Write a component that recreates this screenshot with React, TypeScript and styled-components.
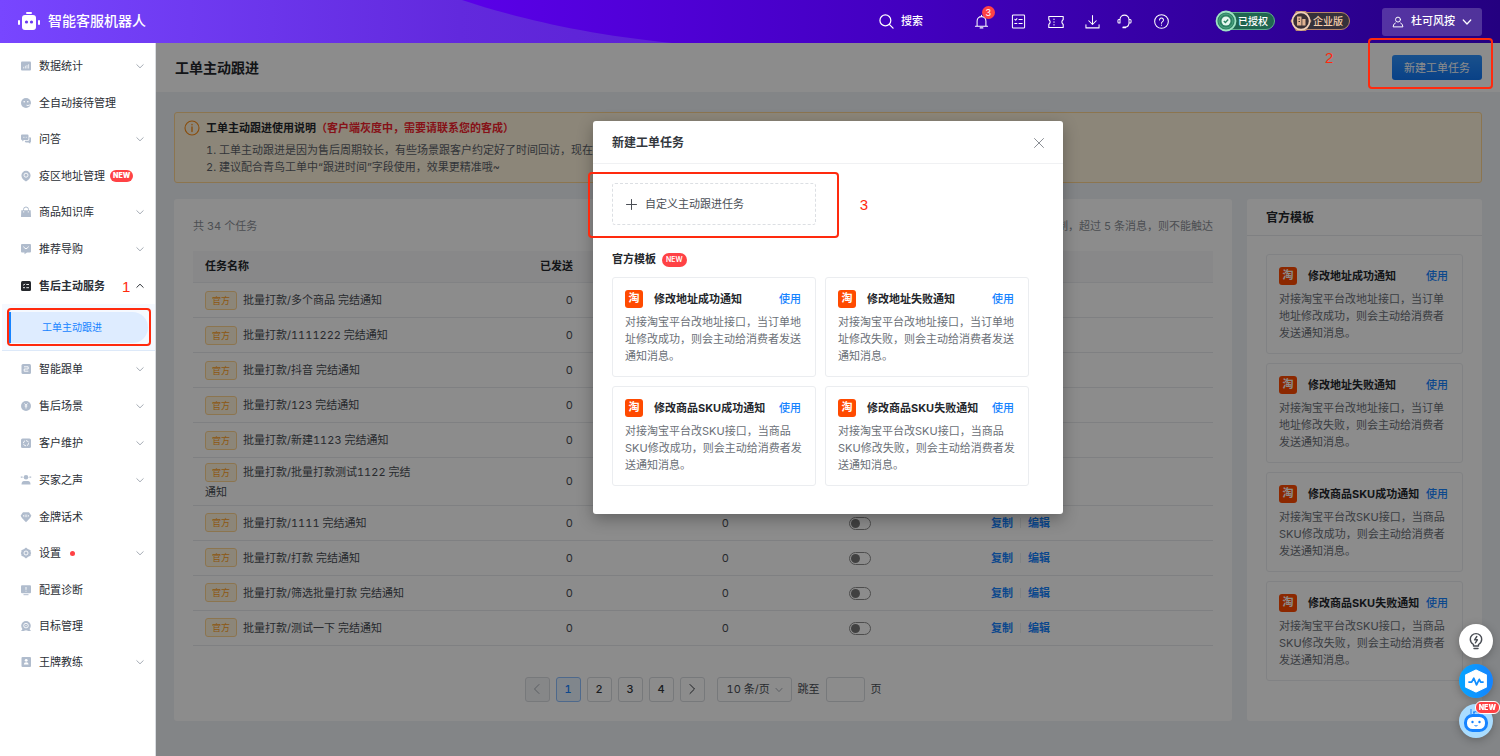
import React, { useState } from 'react';
import styled, { createGlobalStyle, css } from 'styled-components';

const GlobalStyle = createGlobalStyle`
  *, *::before, *::after { box-sizing: border-box; }
  body {
    margin: 0;
    font-family: Inter, "Noto Sans CJK SC", sans-serif;
    font-size: 11px;
    line-height: 17px;
    color: #33373d;
    font-variant-numeric: tabular-nums;
  }
  button, input, select { font: inherit; color: inherit; }
  button { padding: 0; border: 0; background: none; cursor: pointer; }
  a { color: inherit; text-decoration: none; }
  h1, h2, h3, p, ul, ol { margin: 0; padding: 0; }
  ul { list-style: none; }
  svg { display: block; flex: none; }
`;

const blue = '#1683ff';
const red = '#ff4245';
const markRed = '#ff2a0e';

/* ---------- page frame ---------- */

const Page = styled.div`
  display: flex;
  flex-direction: column;
  min-height: 100vh;
`;

const Body = styled.div`
  display: flex;
  flex: 1;
`;

/* ---------- top bar ---------- */

const TopBar = styled.header`
  position: relative;
  display: flex;
  align-items: center;
  justify-content: space-between;
  height: 43px;
  padding: 0 18px;
  overflow: hidden;
  background: linear-gradient(90deg, #7846ff 0, #6229dd 460px, #5b20d2 720px);
  color: #fff;
`;

const TopBarWave = styled.svg`
  position: absolute;
  inset: 0;
  width: 100%;
  height: 100%;
`;

const Brand = styled.a`
  position: relative;
  display: flex;
  align-items: center;
  gap: 8px;
  padding-bottom: 2px;
  font-size: 14px;
  font-weight: 500;
  line-height: 20px;
`;

const TopTools = styled.div`
  position: relative;
  display: flex;
  align-items: center;
`;

const SearchButton = styled.button`
  display: flex;
  align-items: center;
  gap: 7px;
  margin-right: 51px;
  font-weight: 500;
`;

const IconGroup = styled.div<{ $gap: number }>`
  display: flex;
  align-items: center;
  gap: ${(p) => p.$gap}px;
`;

const IconButton = styled.button`
  position: relative;
  display: grid;
  place-items: center;
  width: 15px;
  height: 20px;
`;

const Count = styled.span`
  position: absolute;
  top: -6px;
  left: 8px;
  width: 13px;
  height: 13px;
  border-radius: 7px;
  background: ${red};
  font-size: 9px;
  line-height: 13px;
  text-align: center;
`;

const Plans = styled.div`
  display: flex;
  gap: 15px;
  margin: 0 32px 0 46px;
  padding-bottom: 2px;
`;

const Plan = styled.span<{ $tone: 'green' | 'bronze' }>`
  display: flex;
  align-items: center;
  width: 60px;
  height: 22px;
  font-size: 10px;
  font-weight: 500;
  line-height: 16px;
  color: ${(p) => (p.$tone === 'green' ? '#fff' : '#f6cfae')};

  span {
    flex: 1;
    height: 18px;
    margin-left: -10px;
    padding-left: 10px;
    border: 1px solid ${(p) => (p.$tone === 'green' ? '#5fae8b' : '#b58468')};
    border-radius: 0 9px 9px 0;
    background: ${(p) => (p.$tone === 'green' ? '#1f6650' : '#35303a')};
    white-space: nowrap;
  }

  svg { position: relative; }
`;

const UserButton = styled.button`
  display: flex;
  align-items: center;
  justify-content: center;
  gap: 7px;
  width: 100px;
  height: 28px;
  border-radius: 3px;
  background: rgba(255, 255, 255, 0.2);
  font-weight: 500;
`;

/* ---------- side bar ---------- */

const SideBar = styled.nav`
  flex: none;
  width: 156px;
  padding-top: 5px;
  border-right: 1px solid #d9dce0;
  background: #fff;
`;

const NavGroup = styled.li<{ $expandable: boolean; $open?: boolean }>`
  padding-bottom: ${(p) => (p.$expandable && !p.$open ? 1 : 0)}px;
`;

const NavItem = styled.a<{ $active?: boolean }>`
  position: relative;
  display: flex;
  align-items: center;
  height: 36px;
  padding: 0 11px 0 20px;
  font-weight: ${(p) => (p.$active ? 700 : 400)};
  color: #2b2f36;

  > svg:first-child { color: ${(p) => (p.$active ? '#24272c' : '#b0bccd')}; }
`;

const NavLabel = styled.span`
  margin-left: 7px;
`;

const NavArrow = styled.svg<{ $active?: boolean }>`
  margin-left: auto;
  color: ${(p) => (p.$active ? '#33373d' : '#a6acb5')};
`;

const NavDot = styled.i`
  width: 5px;
  height: 5px;
  margin-left: 9px;
  border-radius: 50%;
  background: ${red};
`;

const NewFlag = styled.em`
  height: 12px;
  margin-left: 5px;
  padding: 0 3px;
  border-radius: 6px;
  background: ${red};
  color: #fff;
  font-size: 7px;
  font-style: normal;
  font-weight: 900;
  line-height: 12px;
`;

const SubMenu = styled.ul`
  height: 47px;
  margin-left: 2px;
  padding: 8px 7px;
  border-bottom: 1px solid #dde9f9;
  background: #f5f9ff;
`;

const SubItem = styled.a`
  position: relative;
  display: flex;
  align-items: center;
  height: 31px;
  padding-left: 31px;
  border-left: 2px solid ${blue};
  border-radius: 0 16px 16px 0;
  background: #deecff;
  color: ${blue};
  font-size: 10px;
`;

/* ---------- annotation marks laid over the page ---------- */

const markFrame = css`
  border: 2px solid ${markRed};
  border-radius: 4px;
  pointer-events: none;
`;

const markDigit = css`
  color: ${markRed};
  font-family: "Liberation Sans", sans-serif;
  font-size: 15px;
  font-weight: 400;
  line-height: 18px;
`;

const SubItemMark = styled.span`
  ${markFrame}
  position: absolute;
  inset: -4px -3px -3px -4px;
`;

const StepOne = styled.span`
  ${markDigit}
  position: absolute;
  top: 10px;
  left: 122px;
`;

const CreateMark = styled.div`
  ${markFrame}
  position: absolute;
  z-index: 3;
  top: 38px;
  right: 7px;
  width: 125px;
  height: 51px;

  span {
    ${markDigit}
    position: absolute;
    top: 9px;
    left: -45px;
  }
`;

const CustomMark = styled.span`
  ${markFrame}
  position: absolute;
  inset: -12px -24px -14px -25px;

  b {
    ${markDigit}
    position: absolute;
    top: 22px;
    right: -31px;
  }
`;

/* ---------- main area ---------- */

const Main = styled.main`
  position: relative;
  flex: 1;
  min-width: 0;
  background: #eff2f6;
`;

const PageHead = styled.div`
  display: flex;
  align-items: center;
  justify-content: space-between;
  height: 49px;
  padding: 0 18px 0 19px;
  background: #fff;

  h1 {
    font-size: 14px;
    font-weight: 700;
    line-height: 20px;
    color: #24272c;
  }
`;

const PrimaryButton = styled.button`
  height: 25px;
  padding: 1px 12px 0;
  border-radius: 3px;
  background: linear-gradient(#2f93ff, #1177f5);
  color: #fff;
`;

const Content = styled.div`
  padding: 20px 18px 36px;
`;

const Notice = styled.section`
  display: flex;
  gap: 6px;
  height: 71px;
  padding: 7px 9px;
  border: 1px solid #ffd591;
  border-radius: 3px;
  background: #fff5dd;
  color: #5d6269;

  h2 {
    font-size: 11px;
    font-weight: 700;
    line-height: 17px;
    color: #24272c;
  }
  h2 span { color: #f5222d; }
  p:first-of-type { margin-top: 5px; }
`;

const Columns = styled.div`
  display: flex;
  align-items: stretch;
  gap: 15px;
  margin-top: 16px;
`;

const Panel = styled.section`
  border-radius: 3px;
  background: #fff;
`;

const TaskPanel = styled(Panel)`
  flex: 1;
  min-width: 0;
  padding: 19px;
`;

const TaskSummary = styled.div`
  display: flex;
  justify-content: space-between;
  height: 33px;
  color: #8b9097;
`;

const TaskTable = styled.table`
  width: 100%;
  border-collapse: separate;
  border-spacing: 0;
  table-layout: fixed;

  th {
    height: 32px;
    padding: 0 12px;
    border-bottom: 1px solid #ebedf0;
    background: #f8f8f9;
    color: #24272c;
    font-weight: 700;
    text-align: left;
  }
  td {
    height: 35px;
    padding: 4px 12px;
    border-bottom: 1px solid #e8eaed;
    color: #4a4e55;
    line-height: 18px;
  }
  td.name { padding-right: 8px; }
  th.num, td.num { text-align: right; }
  td.mid { text-align: center; }
`;

const OfficialTag = styled.span`
  display: inline-block;
  height: 19px;
  margin-right: 6px;
  padding: 0 6px;
  border: 1px solid #ffd591;
  border-radius: 3px;
  background: #fff5dd;
  color: #ffa023;
  font-size: 9px;
  line-height: 17px;
  vertical-align: middle;
`;

const TaskName = styled.span`
  vertical-align: middle;
`;

const Switch = styled.input`
  appearance: none;
  display: block;
  width: 22px;
  height: 13px;
  margin: 2px auto 0;
  padding: 1px;
  border: 1px solid #8d8d8d;
  border-radius: 7px;
  cursor: pointer;

  &::before {
    content: '';
    display: block;
    width: 9px;
    height: 9px;
    border-radius: 50%;
    background: #777;
  }
  &:checked { border-color: ${blue}; }
  &:checked::before { margin-left: auto; background: ${blue}; }
`;

const RowActions = styled.div`
  display: flex;
  align-items: center;
  gap: 7px;
  color: ${blue};
  font-weight: 700;

  i {
    width: 1px;
    height: 10px;
    background: #eceef1;
  }
`;

const Pager = styled.nav`
  display: flex;
  align-items: center;
  justify-content: center;
  gap: 6px;
  margin-top: 31px;
  color: #4a4e55;

  label { display: contents; }
`;

const PageButton = styled.button<{ $current?: boolean }>`
  display: grid;
  place-items: center;
  width: 25px;
  height: 25px;
  border: 1px solid ${(p) => (p.$current ? '#8fbfff' : '#d9dce0')};
  border-radius: 3px;
  background: ${(p) => (p.$current ? '#e9f4ff' : '#fff')};
  color: ${(p) => (p.$current ? blue : '#33373d')};
  font-weight: 500;

  &:disabled {
    background: #f5f6f8;
    color: #a6acb5;
  }
`;

const SizeField = styled.div`
  position: relative;
  margin-left: 6px;

  select {
    appearance: none;
    display: block;
    width: 75px;
    height: 25px;
    padding: 0 9px;
    border: 1px solid #d9dce0;
    border-radius: 3px;
    background: #fff;
  }
  svg {
    position: absolute;
    top: 9px;
    right: 9px;
    color: #a6acb5;
    pointer-events: none;
  }
`;

const JumpInput = styled.input`
  width: 39px;
  height: 25px;
  border: 1px solid #d9dce0;
  border-radius: 3px;
  background: #fff;
`;

const TemplatePanel = styled(Panel)`
  flex: none;
  width: 235px;

  > h2 {
    height: 37px;
    padding: 0 19px;
    border-bottom: 1px solid #e8eaed;
    font-size: 12px;
    font-weight: 700;
    line-height: 38px;
    color: #24272c;
  }
  > ul {
    display: flex;
    flex-direction: column;
    gap: 9px;
    padding: 18px 19px;
  }
`;

/* ---------- template card, used in the side panel and the dialog ---------- */

const Card = styled.li`
  padding: 12px 12px 11px;
  border: 1px solid #ebedf0;
  border-radius: 3px;

  p {
    margin-top: 6px;
    color: #6b7077;
  }
`;

const CardHead = styled.div`
  display: flex;
  align-items: center;
  height: 18px;
  padding-right: 2px;

  h3 {
    flex: 1;
    margin-left: 11px;
    font-size: 11px;
    font-weight: 700;
    line-height: 17px;
    color: #24272c;
    white-space: nowrap;
  }
  button {
    color: ${blue};
    font-weight: 500;
  }
`;

const ShopMark = styled.span`
  width: 18px;
  height: 18px;
  border-radius: 3px;
  background: #ff4a00;
  color: #fff;
  font-size: 11px;
  font-weight: 700;
  line-height: 17px;
  text-align: center;
`;

/* ---------- dialog ---------- */

const Mask = styled.div`
  position: absolute;
  z-index: 1;
  inset: 0;
  display: flex;
  justify-content: center;
  align-items: flex-start;
  padding-top: 78px;
  background: rgba(0, 0, 0, 0.45);
`;

const Dialog = styled.div`
  width: 470px;
  border-radius: 3px;
  background: #fff;
  box-shadow: 0 5px 16px rgba(0, 0, 0, 0.3);
`;

const DialogHead = styled.div`
  display: flex;
  align-items: center;
  justify-content: space-between;
  height: 43px;
  padding: 2px 18px 0 19px;
  border-bottom: 1px solid #f0f1f3;

  h2 {
    font-size: 12px;
    font-weight: 700;
    line-height: 18px;
    color: #33373d;
  }
  button { color: #8b8f95; }
`;

const DialogBody = styled.div`
  padding: 19px 19px 28px;
`;

const CustomTask = styled.button`
  position: relative;
  display: flex;
  align-items: center;
  gap: 8px;
  width: 204px;
  height: 42px;
  padding: 1px 13px 0;
  border: 1px dashed #dcdfe3;
  border-radius: 3px;
  color: #4a4e55;
`;

const GroupTitle = styled.h3`
  display: flex;
  align-items: center;
  gap: 6px;
  margin-top: 26px;
  font-size: 11px;
  font-weight: 700;
  line-height: 17px;
  color: #24272c;

  em {
    height: 14px;
    padding: 0 4px;
    border-radius: 7px;
    background: ${red};
    color: #fff;
    font-size: 7px;
    font-style: normal;
    font-weight: 600;
    line-height: 14px;
  }
`;

const TemplateGrid = styled.ul`
  display: grid;
  grid-template-columns: repeat(2, 204px);
  gap: 9px;
  margin-top: 9px;
`;

/* ---------- floating helpers ---------- */

const FloatStack = styled.div`
  position: fixed;
  z-index: 3;
  right: 7px;
  bottom: 18px;
  display: flex;
  flex-direction: column;
  gap: 6px;
`;

const FloatButton = styled.button<{ $bg: string }>`
  position: relative;
  display: grid;
  place-items: center;
  width: 34px;
  height: 34px;
  border-radius: 50%;
  background: ${(p) => p.$bg};
  box-shadow: 0 2px 8px rgba(0, 0, 0, 0.25);
  color: #4a4e55;

  em {
    position: absolute;
    top: -3px;
    right: -7px;
    height: 13px;
    margin: 0;
    border: 1px solid #fff;
    line-height: 11px;
  }
`;

/* ---------- icons ---------- */

type IconProps = { children: React.ReactNode; size?: number; box?: number; stroke?: number };

const Line = ({ children, size = 16, box = 16, stroke = 1 }: IconProps) => (
  <svg width={size} height={size} viewBox={`0 0 ${box} ${box}`} fill="none" stroke="currentColor" strokeWidth={stroke} strokeLinecap="round" strokeLinejoin="round" aria-hidden="true">
    {children}
  </svg>
);

const Solid = ({ children }: { children: React.ReactNode }) => (
  <svg width="12" height="12" viewBox="0 0 12 12" fill="currentColor" aria-hidden="true">
    {children}
  </svg>
);

const Chevron = ({ up, size = 8 }: { up?: boolean; size?: number }) => (
  <Line size={size} box={8} stroke={1}>
    <path d={up ? 'M1 5.6 4 2.4 7 5.6' : 'M1 2.4 4 5.6 7 2.4'} />
  </Line>
);

const w = { stroke: '#fff', strokeWidth: 0.9, fill: 'none' } as const;

const navIcons: Record<string, React.ReactNode> = {
  stats: <Solid><rect x="1" y="1.5" width="10" height="9" rx="1" /><path d="M3.7 8.5V6.8M5.4 8.5V5.8M7 8.5V5M8.6 8.5V4.2" {...w} strokeWidth=".7" /></Solid>,
  reception: <Solid><circle cx="6" cy="6" r="5" /><circle cx="4.2" cy="4.8" r=".8" fill="#fff" /><circle cx="7.8" cy="4.8" r=".8" fill="#fff" /><path d="M6.500 8.200Q8 9 9.500 8H11" {...w} /></Solid>,
  qa: <Solid><path d="M1 2.400Q1 1.500 2 1.500H7.500Q8.500 1.500 8.500 2.500V6Q8.500 7 7.500 7H4L2.300 8.500V7H2Q1 7 1 6Z" /><path d="M9.300 4.200H10Q11 4.200 11 5.200V8.500Q11 9.400 10.200 9.400V10.800L8.500 9.400H5.800Q4.900 9.400 4.900 8.600V7.800H8Q9.300 7.800 9.300 6.500Z" /><path d="M3.200 4.300H3.800M4.600 4.300H5.200M6 4.300H6.600" {...w} /></Solid>,
  pin: <Solid><path d="M6 .8A4.600 4.600 0 0 1 10.600 5.400C10.600 8 8.500 9.800 6 11.400 3.500 9.800 1.400 8 1.400 5.400A4.600 4.600 0 0 1 6 .8Z" /><circle cx="6" cy="5.200" r="2" {...w} /></Solid>,
  bag: <Solid><path d="M1.300 4.200H10.700L11 11H1Z" /><path d="M3.500 5V3.500A2.500 2.500 0 0 1 8.500 3.500V5" fill="none" stroke="currentColor" strokeWidth="1" /><path d="M3.700 5V6.600M8.300 5V6.600" {...w} strokeWidth=".7" /></Solid>,
  guide: <Solid><path d="M2 1H10Q11 1 11 2V8.500Q11 9.500 10 9.500H7L4.500 11.200V9.500H2Q1 9.500 1 8.500V2Q1 1 2 1Z" /><path d="M3.500 3.500 5 5.500H7L8.500 3.500" {...w} /></Solid>,
  service: <Solid><rect x="1" y="1" width="10" height="10" rx="1.500" /><path d="M3 4.500 3.800 5.200 5 3.800M6.300 4.500H9M3 7.700H5M6.300 7.700H9" {...w} /></Solid>,
  follow: <Solid><rect x="1.500" y="1" width="9.500" height="10" rx="1.500" /><path d="M4 3.800H8.200V6H4.200V8.200H8.400" {...w} /></Solid>,
  yen: <Solid><circle cx="6" cy="6" r="5" /><path d="M4.500 3.500 6 5.200 7.500 3.500M6 5.200V8.500M4.700 6H7.300" {...w} /></Solid>,
  care: <Solid><rect x="1" y="1.500" width="10" height="9.500" rx="1.500" /><circle cx="6" cy="6.200" r="2.600" {...w} strokeDasharray="3 1" /></Solid>,
  people: <Solid><circle cx="6" cy="3.300" r="2.300" /><path d="M1.500 10.500Q1.500 7 4 7H8Q10.500 7 10.500 10.500Z" /><path d="M.8 3.200H2.600M9.400 3.200H11.200" stroke="currentColor" strokeWidth="1.200" /></Solid>,
  gem: <Solid><path d="M3 1.200H9L11.300 4.400Q11 6.500 6 11.200 1 6.500 .7 4.400Z" /><path d="M3.500 4V5.600M5.200 3.500V6.200M6.800 3.500V6.200M8.500 4V5.600" {...w} strokeWidth=".7" /></Solid>,
  gear: <Solid><path d="M6 .6 7.800 2 10.600 3.200V5L11.200 6 10.600 7.500V8.800L8.200 9.800 6 11.400 3.800 9.800 1.400 8.800V7.500L.8 6 1.400 5V3.200L4.200 2Z" /><circle cx="6" cy="6" r="2" {...w} /></Solid>,
  diagnose: <Solid><rect x="1" y="1.200" width="10" height="8" rx="1" /><path d="M3.500 10.700H8.500" stroke="currentColor" /><path d="M6 3V5.800M6 6.800V7.600" {...w} /></Solid>,
  target: <Solid><circle cx="6" cy="5.800" r="4.800" /><path d="M1 11 3 8.500 5 11ZM11 11 9 8.500 7 11Z" /><circle cx="6" cy="5.600" r="2.300" {...w} /><circle cx="6" cy="5.600" r=".7" fill="#fff" /></Solid>,
  coach: <Solid><rect x="1.500" y="1" width="9.500" height="10" rx="1" /><circle cx="6.200" cy="4.300" r="1.400" fill="#fff" /><path d="M3.800 8.500Q3.800 6.300 6.200 6.300T8.600 8.500Z" fill="#fff" /></Solid>,
};

/* ---------- data ---------- */

type NavEntry = { icon: string; label: string; expandable?: boolean; open?: boolean; flag?: 'new' | 'dot'; children?: string[] };

const nav: NavEntry[] = [
  { icon: 'stats', label: '数据统计', expandable: true },
  { icon: 'reception', label: '全自动接待管理' },
  { icon: 'qa', label: '问答', expandable: true },
  { icon: 'pin', label: '疫区地址管理', flag: 'new' },
  { icon: 'bag', label: '商品知识库', expandable: true },
  { icon: 'guide', label: '推荐导购', expandable: true },
  { icon: 'service', label: '售后主动服务', expandable: true, open: true, children: ['工单主动跟进'] },
  { icon: 'follow', label: '智能跟单', expandable: true },
  { icon: 'yen', label: '售后场景', expandable: true },
  { icon: 'care', label: '客户维护', expandable: true },
  { icon: 'people', label: '买家之声', expandable: true },
  { icon: 'gem', label: '金牌话术' },
  { icon: 'gear', label: '设置', expandable: true, flag: 'dot' },
  { icon: 'diagnose', label: '配置诊断' },
  { icon: 'target', label: '目标管理' },
  { icon: 'coach', label: '王牌教练', expandable: true },
];

const tasks = [
  '批量打款/多个商品 完结通知',
  '批量打款/1111222 完结通知',
  '批量打款/抖音 完结通知',
  '批量打款/123 完结通知',
  '批量打款/新建1123 完结通知',
  '批量打款/批量打款测试1122 完结通知',
  '批量打款/1111 完结通知',
  '批量打款/打款 完结通知',
  '批量打款/筛选批量打款 完结通知',
  '批量打款/测试一下 完结通知',
];

const templates = [
  { title: '修改地址成功通知', text: '对接淘宝平台改地址接口，当订单地址修改成功，则会主动给消费者发送通知消息。' },
  { title: '修改地址失败通知', text: '对接淘宝平台改地址接口，当订单地址修改失败，则会主动给消费者发送通知消息。' },
  { title: '修改商品SKU成功通知', text: '对接淘宝平台改SKU接口，当商品SKU修改成功，则会主动给消费者发送通知消息。' },
  { title: '修改商品SKU失败通知', text: '对接淘宝平台改SKU接口，当商品SKU修改失败，则会主动给消费者发送通知消息。' },
];

/* ---------- pieces ---------- */

const TemplateCards = () => (
  <>
    {templates.map((t) => (
      <Card key={t.title}>
        <CardHead>
          <ShopMark>淘</ShopMark>
          <h3>{t.title}</h3>
          <button type="button">使用</button>
        </CardHead>
        <p>{t.text}</p>
      </Card>
    ))}
  </>
);

const Header = () => (
  <TopBar>
    <TopBarWave aria-hidden="true">
      <defs>
        <linearGradient id="deep" gradientUnits="userSpaceOnUse" x1="465" y1="0" x2="1500" y2="0">
          <stop offset="0" stopColor="#5a00e8" />
          <stop offset=".4" stopColor="#4400c2" />
          <stop offset="1" stopColor="#240080" />
        </linearGradient>
      </defs>
      <path d="M462 0C510 16 580 34 672 43H4000V0Z" fill="url(#deep)" />
    </TopBarWave>
    <Brand href="#">
      <svg width="22" height="20" viewBox="0 0 22 20" fill="#fff" aria-hidden="true">
        <rect x="8" y="1" width="6" height="2" rx="1" />
        <rect x="4" y="4" width="14" height="15" rx="3" />
        <rect x="0" y="9" width="2" height="5" rx="1" />
        <rect x="20" y="9" width="2" height="5" rx="1" />
        <circle cx="8.500" cy="11" r="1.600" fill="#6b39f0" />
        <circle cx="13.500" cy="11" r="1.600" fill="#6b39f0" />
      </svg>
      智能客服机器人
    </Brand>
    <TopTools>
      <SearchButton type="button">
        <Line size={15} stroke={1.3}><circle cx="6.800" cy="6.800" r="5.800" /><path d="M11 11 15 15" /></Line>
        搜索
      </SearchButton>
      <IconGroup $gap={22}>
        <IconButton type="button" aria-label="消息">
          <Line size={15} stroke={1.1}><path d="M1.500 13H14.500M3.300 13V7.500a4.700 4.700 0 0 1 9.400 0V13M8 2.800V1.300M6.500 14.800H9.500" /></Line>
          <Count>3</Count>
        </IconButton>
        <IconButton type="button" aria-label="清单">
          <Line size={15} stroke={1.1}><rect x="1.500" y="1" width="13" height="14" rx="1" /><path d="M4 5.600 5 6.600 6.300 5M8.500 5.800H12M4 10.200H6.300M8.500 10.200H12" /></Line>
        </IconButton>
        <IconButton type="button" aria-label="卡券">
          <Line size={16} stroke={1.1}><path d="M.8 2.500H15.200V5.500Q12.500 8 15.200 10.500V13.500H.8V10.500Q3.500 8 .8 5.500Z" /><path d="M6 5V5.500M6 7.700V8.300M6 10.500V11" /></Line>
        </IconButton>
        <IconGroup $gap={17}>
          <IconButton type="button" aria-label="下载">
            <Line size={15} stroke={1.1}><path d="M8 1.500V11M4 7.200 8 11.200 12 7.200M1 11.500V14.800H15V11.500" /></Line>
          </IconButton>
          <IconButton type="button" aria-label="客服">
            <Line size={15} stroke={1.1}><path d="M3.200 9.500V6a4.800 4.800 0 0 1 9.600 0V9.500M3.200 5.800H2Q1 5.800 1 7V8.500Q1 9.700 2 9.700H3.200M12.800 5.800H14Q15 5.800 15 7V8.500Q15 9.700 14 9.700H12.800Q12.500 13.500 9 14.200" /><path d="M6.700 14.300H8.800" strokeWidth="2" /></Line>
          </IconButton>
        </IconGroup>
        <IconButton type="button" aria-label="帮助">
          <Line size={15} stroke={1.1}><circle cx="8" cy="8" r="7.300" /><path d="M5.900 6.400a2.100 2.100 0 1 1 3.300 1.700C8.300 8.700 8 9 8 9.800M8 11.800V12" /></Line>
        </IconButton>
      </IconGroup>
      <Plans>
        <Plan $tone="green">
          <svg width="22" height="22" viewBox="0 0 22 22" aria-hidden="true">
            <circle cx="11" cy="11" r="9.500" fill="#2c8263" stroke="#9fe3c4" strokeWidth="1.800" />
            <circle cx="11" cy="11" r="7" fill="none" stroke="#4fa583" />
            <circle cx="11" cy="11" r="4.500" fill="#e6f7ef" />
            <path d="M8.800 11 10.400 12.600 13.200 9.600" fill="none" stroke="#2c8263" strokeWidth="1.400" />
          </svg>
          <span>已授权</span>
        </Plan>
        <Plan $tone="bronze">
          <svg width="22" height="22" viewBox="0 0 22 22" aria-hidden="true">
            <path d="M6 1H16L21.500 11 16 21H6L.5 11Z" fill="#b98a6e" />
            <circle cx="11" cy="11" r="8.600" fill="#3a3036" stroke="#f1d2bb" strokeWidth="1.600" />
            <path d="M7 6.500H11.500V15.500H7ZM12.300 9H15.500V15.500H12.300Z" fill="#e0b291" />
            <path d="M8.500 9H10M8.500 11.500H10" stroke="#3a3036" />
          </svg>
          <span>企业版</span>
        </Plan>
      </Plans>
      <UserButton type="button">
        <Line size={12} stroke={1.3}><circle cx="8" cy="4.800" r="3.300" /><path d="M4.500 9.300Q1.500 10.500 1.500 14.500H14.500Q14.500 10.500 11.500 9.300" /></Line>
        杜可风按
        <Chevron size={10} />
      </UserButton>
    </TopTools>
  </TopBar>
);

const Side = () => (
  <SideBar aria-label="主导航">
    <ul>
      {nav.map((n) => (
        <NavGroup key={n.label} $expandable={!!n.expandable} $open={n.open}>
          <NavItem href="#" $active={n.open}>
            {navIcons[n.icon]}
            <NavLabel>{n.label}</NavLabel>
            {n.flag === 'new' && <NewFlag>NEW</NewFlag>}
            {n.flag === 'dot' && <NavDot />}
            {n.open && <StepOne>1</StepOne>}
            {n.expandable && (
              <NavArrow $active={n.open} width="8" height="8" viewBox="0 0 8 8" fill="none" stroke="currentColor" aria-hidden="true">
                <path d={n.open ? 'M.5 5.600 4 2.200 7.500 5.600' : 'M.5 2.400 4 5.800 7.500 2.400'} />
              </NavArrow>
            )}
          </NavItem>
          {n.children && (
            <SubMenu>
              {n.children.map((c) => (
                <li key={c}>
                  <SubItem href="#" aria-current="page">
                    {c}
                    <SubItemMark />
                  </SubItem>
                </li>
              ))}
            </SubMenu>
          )}
        </NavGroup>
      ))}
    </ul>
  </SideBar>
);

const Tasks = () => {
  const [page, setPage] = useState(1);
  return (
    <TaskPanel>
      <TaskSummary>
        <span>共 34 个任务</span>
        <span>受平台消息限制，超过 5 条消息，则不能触达</span>
      </TaskSummary>
      <TaskTable>
        <colgroup>
          <col width="228" />
          <col width="164" />
          <col width="156" />
          <col width="238" />
          <col />
        </colgroup>
        <thead>
          <tr>
            <th>任务名称</th>
            <th className="num">已发送</th>
            <th className="num" aria-label="已回复" />
            <th aria-label="状态" />
            <th aria-label="操作" />
          </tr>
        </thead>
        <tbody>
          {tasks.map((t) => (
            <tr key={t}>
              <td className="name"><OfficialTag>官方</OfficialTag><TaskName>{t}</TaskName></td>
              <td className="num">0</td>
              <td className="num">0</td>
              <td className="mid"><Switch type="checkbox" role="switch" aria-label={t} /></td>
              <td>
                <RowActions>
                  <a href="#">复制</a>
                  <i />
                  <a href="#">编辑</a>
                </RowActions>
              </td>
            </tr>
          ))}
        </tbody>
      </TaskTable>
      <Pager aria-label="分页">
        <PageButton type="button" disabled aria-label="上一页">
          <Line size={12} box={12}><path d="M8 1.500 3.500 6 8 10.500" /></Line>
        </PageButton>
        {[1, 2, 3, 4].map((n) => (
          <PageButton key={n} type="button" $current={n === page} onClick={() => setPage(n)}>{n}</PageButton>
        ))}
        <PageButton type="button" aria-label="下一页">
          <Line size={12} box={12}><path d="M4 1.500 8.500 6 4 10.500" /></Line>
        </PageButton>
        <SizeField>
          <select aria-label="每页条数" defaultValue="10">
            <option value="10">10 条/页</option>
            <option value="20">20 条/页</option>
          </select>
          <Chevron />
        </SizeField>
        <label>跳至 <JumpInput type="text" /> 页</label>
      </Pager>
    </TaskPanel>
  );
};

const CreateDialog = () => (
  <Mask>
    <Dialog role="dialog" aria-modal="true" aria-labelledby="create-title">
      <DialogHead>
        <h2 id="create-title">新建工单任务</h2>
        <button type="button" aria-label="关闭">
          <Line size={12} box={12}><path d="M1.500 1.500 10.500 10.500M10.500 1.500 1.500 10.500" /></Line>
        </button>
      </DialogHead>
      <DialogBody>
        <CustomTask type="button">
          <Line size={11} box={11}><path d="M5.500 .5V10.500M.5 5.500H10.500" /></Line>
          自定义主动跟进任务
          <CustomMark><b>3</b></CustomMark>
        </CustomTask>
        <GroupTitle>官方模板 <em>NEW</em></GroupTitle>
        <TemplateGrid>
          <TemplateCards />
        </TemplateGrid>
      </DialogBody>
    </Dialog>
  </Mask>
);

const Helpers = () => (
  <FloatStack>
    <FloatButton type="button" aria-label="建议" $bg="#fff">
      <Line size={18} box={18} stroke={1.4}>
        <path d="M6.500 12.500C4.500 11.300 3.300 9.500 3.300 7.300a5.700 5.700 0 0 1 11.400 0C14.700 9.500 13.500 11.300 11.500 12.500V14H6.500ZM7 16.500H11" />
        <path d="M9.800 4.500 7.600 7.800H10.400L8.400 10.800" />
      </Line>
    </FloatButton>
    <FloatButton type="button" aria-label="监控" $bg="linear-gradient(90deg, #06a5ff, #1683ff)">
      <svg width="24" height="24" viewBox="0 0 22 22" aria-hidden="true">
        <path d="M11 1 20.500 5.500V16.500L11 21 1.500 16.500V5.500Z" fill="#fff" stroke="#fff" strokeLinejoin="round" />
        <path d="M4 12H7L9 8.500 11.500 14.500 14 9.500 15.300 12H18" fill="none" stroke="#0f8dff" strokeWidth="1.600" strokeLinejoin="round" />
      </svg>
    </FloatButton>
    <FloatButton type="button" aria-label="机器人助手" $bg="#a9dcff">
      <svg width="28" height="28" viewBox="0 0 28 28" aria-hidden="true">
        <path d="M9 2V7M12 4V7M11 6Q14 3 17 6" fill="none" stroke="#1683ff" />
        <rect x="3.500" y="8.500" width="21" height="15" rx="7" fill="#fff" stroke="#1683ff" strokeWidth="3" />
        <circle cx="10.500" cy="15" r="1.200" fill="#1683ff" />
        <circle cx="17.500" cy="15" r="1.200" fill="#1683ff" />
        <path d="M12.500 18.500Q14 19.500 15.500 18.500" fill="none" stroke="#1683ff" />
      </svg>
      <NewFlag>NEW</NewFlag>
    </FloatButton>
  </FloatStack>
);

export default function App() {
  return (
    <Page lang="zh-CN">
      <GlobalStyle />
      <Header />
      <Body>
        <Side />
        <Main>
          <PageHead>
            <h1>工单主动跟进</h1>
            <PrimaryButton type="button">新建工单任务</PrimaryButton>
          </PageHead>
          <Content>
            <Notice>
              <Line size={16} stroke={1.1}>
                <g stroke="#fa8c16"><circle cx="8" cy="8" r="7" /><path d="M8 7V11.500M8 4.500V4.800" strokeWidth="1.400" /></g>
              </Line>
              <div>
                <h2>工单主动跟进使用说明<span>（客户端灰度中，需要请联系您的客成）</span></h2>
                <p>1. 工单主动跟进是因为售后周期较长，有些场景跟客户约定好了时间回访，现在可以主动跟进。</p>
                <p>2. 建议配合青鸟工单中“跟进时间”字段使用，效果更精准哦~</p>
              </div>
            </Notice>
            <Columns>
              <Tasks />
              <TemplatePanel>
                <h2>官方模板</h2>
                <ul>
                  <TemplateCards />
                </ul>
              </TemplatePanel>
            </Columns>
          </Content>
          <CreateDialog />
        </Main>
      </Body>
      <CreateMark><span>2</span></CreateMark>
      <Helpers />
    </Page>
  );
}
